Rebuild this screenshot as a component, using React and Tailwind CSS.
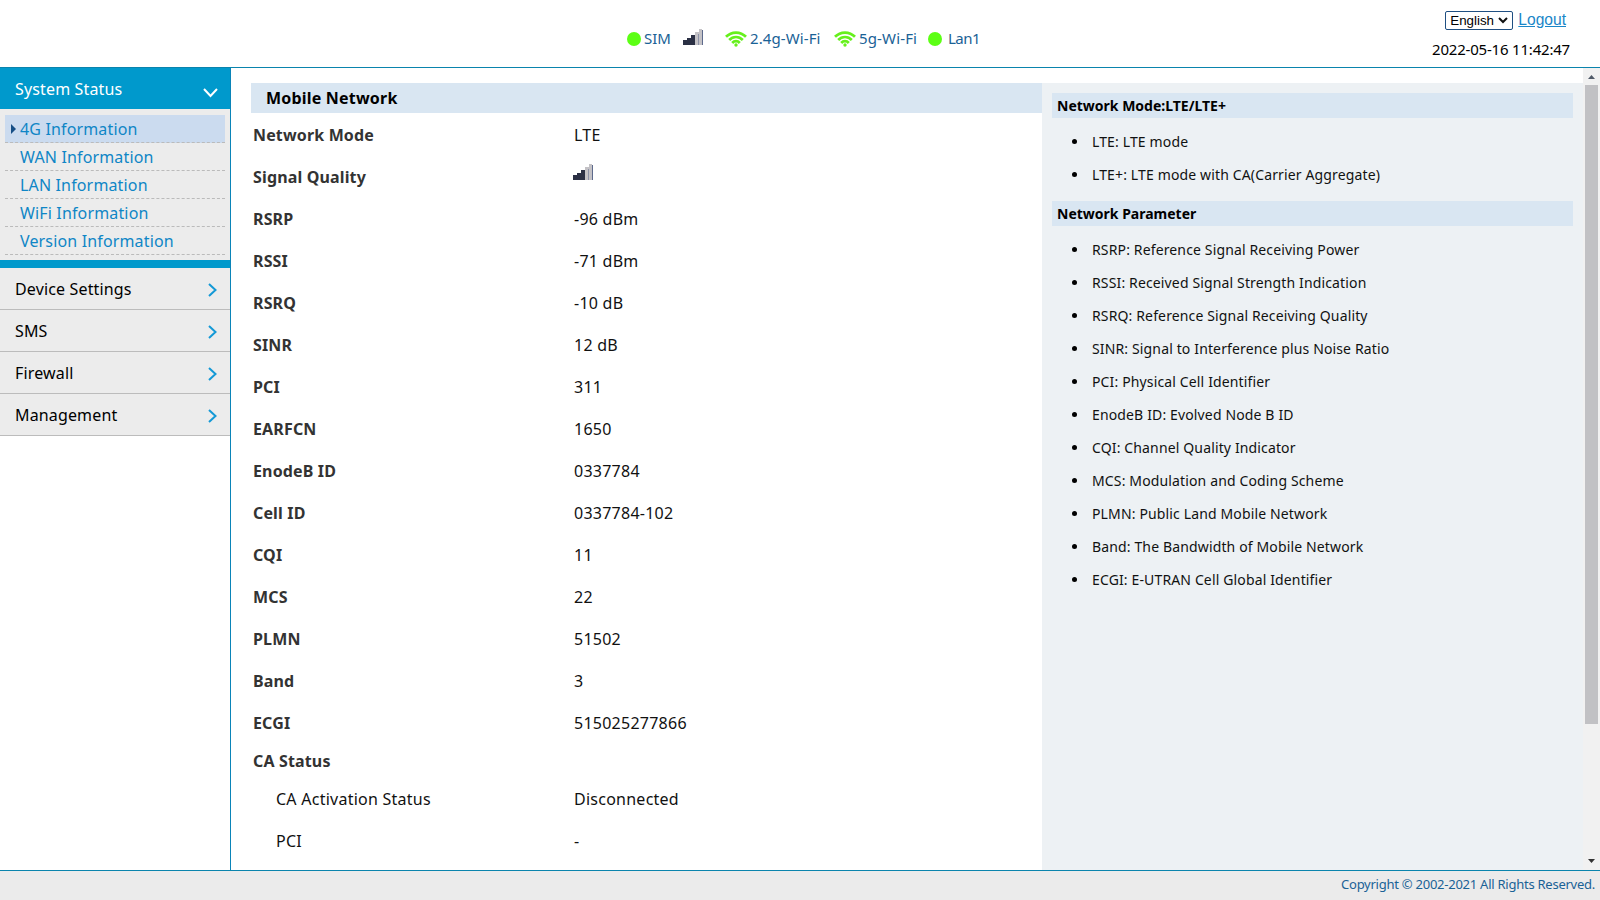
import React from 'react';

const menuItems = ['Device Settings', 'SMS', 'Firewall', 'Management'];

const subItems = ['4G Information', 'WAN Information', 'LAN Information', 'WiFi Information', 'Version Information'];

const networkInfo = [
  { label: 'Network Mode', value: 'LTE' },
  { label: 'Signal Quality', signal: true },
  { label: 'RSRP', value: '-96 dBm' },
  { label: 'RSSI', value: '-71 dBm' },
  { label: 'RSRQ', value: '-10 dB' },
  { label: 'SINR', value: '12 dB' },
  { label: 'PCI', value: '311' },
  { label: 'EARFCN', value: '1650' },
  { label: 'EnodeB ID', value: '0337784' },
  { label: 'Cell ID', value: '0337784-102' },
  { label: 'CQI', value: '11' },
  { label: 'MCS', value: '22' },
  { label: 'PLMN', value: '51502' },
  { label: 'Band', value: '3' },
  { label: 'ECGI', value: '515025277866' },
];

const caInfo = [
  { label: 'CA Activation Status', value: 'Disconnected' },
  { label: 'PCI', value: '-' },
];

const helpSections = [
  {
    title: 'Network Mode:LTE/LTE+',
    items: ['LTE: LTE mode', 'LTE+: LTE mode with CA(Carrier Aggregate)'],
  },
  {
    title: 'Network Parameter',
    items: [
      'RSRP: Reference Signal Receiving Power',
      'RSSI: Received Signal Strength Indication',
      'RSRQ: Reference Signal Receiving Quality',
      'SINR: Signal to Interference plus Noise Ratio',
      'PCI: Physical Cell Identifier',
      'EnodeB ID: Evolved Node B ID',
      'CQI: Channel Quality Indicator',
      'MCS: Modulation and Coding Scheme',
      'PLMN: Public Land Mobile Network',
      'Band: The Bandwidth of Mobile Network',
      'ECGI: E-UTRAN Cell Global Identifier',
    ],
  },
];

const SignalIcon = () => (
  <svg width="20" height="16" viewBox="0 0 20 16" shapeRendering="crispEdges">
    <rect x="0" y="11" width="4" height="5" fill="#2b3044" />
    <rect x="4" y="9" width="4" height="7" fill="#2b3044" />
    <rect x="8" y="6" width="4" height="10" fill="#2b3044" />
    <rect x="12" y="3" width="4" height="13" fill="#c4c2c6" />
    <rect x="16" y="0" width="3" height="16" fill="#c4c2c6" />
    <rect x="15" y="5" width="1" height="11" fill="#8d93a8" />
    <rect x="19" y="1" width="1" height="15" fill="#5d6a8c" />
  </svg>
);

const WifiIcon = () => (
  <svg width="22" height="16" viewBox="0 0 22 16" fill="none" stroke="#66f01c" strokeWidth="2.7">
    <path d="M1 5.8C6.5 0.1 15.5 0.1 21 5.8" />
    <path d="M4.2 9C8 5 14 5 17.8 9" />
    <path d="M7.2 12C9.3 9.6 12.7 9.6 14.8 12" />
    <circle cx="11" cy="14" r="1.7" fill="#66f01c" stroke="none" />
  </svg>
);

const Dot = () => <span className="w-3.5 h-3.5 rounded-full bg-[#5cff14]" />;

const Header = () => (
  <header className="flex h-[68px] shrink-0 border-b border-[#0a84ad] bg-white">
    <div className="w-[627px] shrink-0" />
    <div className="flex h-[77px] w-[400px] items-center text-[15px] text-[#1a6296]">
      <Dot />
      <span className="ml-[3px] w-[39px]">SIM</span>
      <span className="-mt-[3px] w-[42px]"><SignalIcon /></span>
      <WifiIcon />
      <span className="ml-[3px] w-[84px] tracking-[0.1px]">2.4g-Wi-Fi</span>
      <WifiIcon />
      <span className="ml-[3px] w-[69px] tracking-[0.15px]">5g-Wi-Fi</span>
      <Dot />
      <span className="ml-1.5 tracking-[-0.5px]">Lan1</span>
    </div>
    <div className="ml-auto flex flex-col items-end pr-[30px]">
      <div className="mt-[11px] mr-1 flex h-[19px] items-center gap-[5px]">
        <div className="flex h-[19px] w-[68px] items-center justify-between rounded-[2px] border border-[#1f4f82] pl-1 pr-1 font-['Liberation_Sans',Arial,sans-serif] text-[13.33px] text-black">
          English
          <svg width="10" height="7" viewBox="0 0 10 7" fill="none" stroke="#111" strokeWidth="2">
            <path d="M1 1L5 5L9 1" />
          </svg>
        </div>
        <a className="-mt-0.5 font-['Liberation_Sans',Arial,sans-serif] text-[15.6px] text-[#1a86c8] underline">Logout</a>
      </div>
      <div className="mt-2 text-[15px] leading-[22px] tracking-[-0.2px] text-black">2022-05-16 11:42:47</div>
    </div>
  </header>
);

const Sidebar = () => (
  <aside className="w-[231px] shrink-0 border-r border-[#0a84b8] tracking-[0.15px]">
    <div className="flex h-[41px] items-center justify-between bg-[#0099cc] pr-3 pl-[15px] text-white">
      <span>System Status</span>
      <svg className="mt-2" width="15" height="10" viewBox="0 0 15 10" fill="none" stroke="white" strokeWidth="2">
        <path d="M1 1L7.5 8L14 1" />
      </svg>
    </div>
    <ul className="h-[151px] bg-[#ececec] px-[5px] pt-1.5">
      {subItems.map((item, i) => (
        <li
          key={item}
          className={`flex h-7 items-center border-b border-dashed border-[#bbb] text-[#0f86c6] ${i === 0 ? 'bg-[#cbdbef]' : ''}`}
        >
          <span className="flex w-[15px] justify-center pl-px">
            {i === 0 && (
              <svg width="5" height="10" viewBox="0 0 5 10"><path d="M0 0L5 5L0 10Z" fill="#174f86" /></svg>
            )}
          </span>
          <span>{item}</span>
        </li>
      ))}
    </ul>
    <div className="h-2 bg-[#0099cc]" />
    {menuItems.map((item) => (
      <div key={item} className="flex h-[42px] items-center justify-between border-b border-[#bcbcbc] bg-[#ececec] pr-[13px] pl-[15px] text-black">
        <span>{item}</span>
        <svg className="mt-0.5" width="9" height="14" viewBox="0 0 9 14" fill="none" stroke="#1499d6" strokeWidth="2">
          <path d="M1 1L7.5 7L1 13" />
        </svg>
      </div>
    ))}
  </aside>
);

const MobileNetwork = () => (
  <section className="w-[791px] shrink-0">
    <h2 className="h-[30px] bg-[#d9e6f2] pl-[15px] leading-[30px] font-bold tracking-[0.2px] text-black">Mobile Network</h2>
    <div className="pt-px pl-0.5">
      {networkInfo.map((row) => (
        <div key={row.label} className="flex h-[42px] items-center">
          <span className="w-80 font-bold tracking-[0.15px] text-[#333]">{row.label}</span>
          {row.signal ? (
            <span className="-mt-2.5"><SignalIcon /></span>
          ) : (
            <span className="pl-px tracking-[0.25px] text-[#111]">{row.value}</span>
          )}
        </div>
      ))}
      <div className="h-[34px] leading-[34px] font-bold tracking-[0.15px] text-[#333]">CA Status</div>
      {caInfo.map((row) => (
        <div key={row.label} className="flex h-[42px] items-center tracking-[0.25px] text-[#111]">
          <span className="w-80 pl-[23px]">{row.label}</span>
          <span className="pl-px">{row.value}</span>
        </div>
      ))}
    </div>
  </section>
);

const HelpPanel = () => (
  <section className="grow bg-[#edf1f4] pt-2.5 pr-[10px] pl-2.5 text-[14px]">
    {helpSections.map((section) => (
      <div key={section.title} className="mb-2.5">
        <h3 className="h-[25px] bg-[#d9e6f2] pl-[5px] leading-[25px] font-bold text-black">{section.title}</h3>
        <ul className="pt-[7px] pl-5">
          {section.items.map((item) => (
            <li key={item} className="flex h-[33px] items-center tracking-[0.14px] text-[#111]">
              <span className="mr-[15px] h-[5px] w-[5px] rounded-full bg-black" />
              {item}
            </li>
          ))}
        </ul>
      </div>
    ))}
  </section>
);

const Scrollbar = () => (
  <div className="flex w-[17px] shrink-0 flex-col items-center bg-[#f1f1f1]">
    <div className="flex h-[17px] items-center">
      <svg width="7" height="4" viewBox="0 0 7 4"><path d="M3.5 0L7 4H0Z" fill="#505a68" /></svg>
    </div>
    <div className="h-[639px] w-[13px] bg-[#c1c1c4]" />
    <div className="mt-auto flex h-[19px] items-center">
      <svg width="7" height="4" viewBox="0 0 7 4"><path d="M0 0H7L3.5 4Z" fill="#333" /></svg>
    </div>
  </div>
);

const App = () => (
  <div className="flex h-screen w-full flex-col overflow-hidden bg-white font-['Noto_Sans','Open_Sans',sans-serif] text-base">
    <Header />
    <div className="flex h-[802px] shrink-0">
      <Sidebar />
      <main className="flex grow overflow-hidden pt-[15px] pl-5">
        <MobileNetwork />
        <HelpPanel />
      </main>
      <Scrollbar />
    </div>
    <footer className="h-[30px] shrink-0 border-t border-[#0a84ad] bg-[#ebebeb] pr-[5px] text-right text-[13px] leading-[27px] tracking-[-0.25px] text-[#1a6296]">
      Copyright © 2002-2021 All Rights Reserved.
    </footer>
  </div>
);

export default App;
